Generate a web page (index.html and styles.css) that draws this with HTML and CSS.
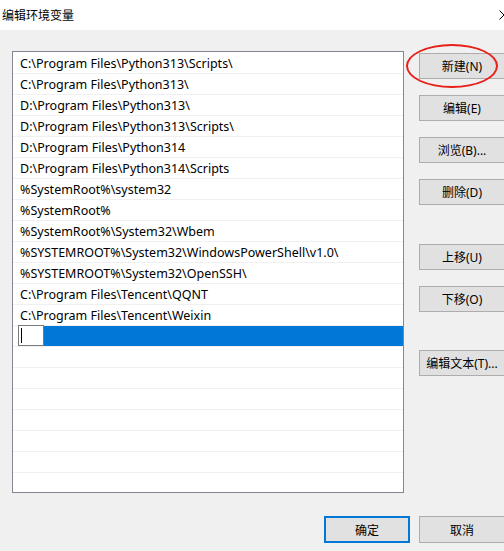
FILE: index.html
```html
<!DOCTYPE html>
<html lang="zh-CN">
<head>
    <meta charset="UTF-8">
    <title>编辑环境变量</title>
    <link rel="stylesheet" href="styles.css">
</head>
<body>
    <div class="dialog">
        <div class="titlebar">
            <span class="title">编辑环境变量</span>
            <span class="close">
                <svg width="10" height="10" viewBox="0 0 10 10">
                    <path d="M0.5 0.5 L9.5 9.5 M9.5 0.5 L0.5 9.5" stroke="#000" stroke-width="1" fill="none"/>
                </svg>
            </span>
        </div>

        <div class="content">
            <div class="path-list">
                <div class="row">C:\Program Files\Python313\Scripts\</div>
                <div class="row">C:\Program Files\Python313\</div>
                <div class="row">D:\Program Files\Python313\</div>
                <div class="row">D:\Program Files\Python313\Scripts\</div>
                <div class="row">D:\Program Files\Python314</div>
                <div class="row">D:\Program Files\Python314\Scripts</div>
                <div class="row">%SystemRoot%\system32</div>
                <div class="row">%SystemRoot%</div>
                <div class="row">%SystemRoot%\System32\Wbem</div>
                <div class="row">%SYSTEMROOT%\System32\WindowsPowerShell\v1.0\</div>
                <div class="row">%SYSTEMROOT%\System32\OpenSSH\</div>
                <div class="row">C:\Program Files\Tencent\QQNT</div>
                <div class="row">C:\Program Files\Tencent\Weixin</div>
                <div class="row editing">
                    <span class="edit-box"><span class="caret"></span></span>
                    <span class="highlight"></span>
                </div>
                <div class="row"></div>
                <div class="row"></div>
                <div class="row"></div>
                <div class="row"></div>
                <div class="row"></div>
                <div class="row"></div>
                <div class="row"></div>
            </div>

            <div class="side-buttons">
                <div class="group">
                    <button class="btn">新建(N)</button>
                    <button class="btn">编辑(E)</button>
                    <button class="btn">浏览(B)...</button>
                    <button class="btn">删除(D)</button>
                </div>
                <div class="group move">
                    <button class="btn">上移(U)</button>
                    <button class="btn">下移(O)</button>
                </div>
                <button class="btn text-edit">编辑文本(T)...</button>
            </div>
        </div>

        <div class="footer">
            <button class="btn default">确定</button>
            <button class="btn">取消</button>
        </div>

        <!-- red circle drawn around the "new" button -->
        <div class="mark"></div>
    </div>
</body>
</html>
```

FILE: styles.css
```css
body {
    margin: 0;
    width: 504px;
    height: 551px;
    overflow: hidden;
    background: #f0f0f0;
    font-family: "Noto Sans", "Noto Sans CJK SC", sans-serif;
    font-size: 12px;
    color: #000;
}
.dialog {
    position: relative;
    height: 551px;
}
.titlebar {
    height: 30px;
    background: #fff;
    display: flex;
    align-items: center;
    justify-content: space-between;
}
.title {
    padding-left: 2px;
    font-family: "Noto Sans CJK SC", sans-serif;
    font-size: 12px;
    margin-top: -1px;
}
.close {
    display: flex;
    margin-right: -5px;
    margin-top: -1px;
}
.content {
    display: flex;
    padding: 21px 0 0 12px;
    gap: 15px;
}
.path-list {
    width: 392px;
    height: 442px;
    padding-top: 1px;
    box-sizing: border-box;
    border: 1px solid #828790;
    background: #fff;
    overflow: hidden;
    flex-shrink: 0;
}
.row {
    height: 20px;
    line-height: 22px;
    padding-left: 7px;
    font-size: 12.5px;
    border-bottom: 1px solid #f0f0f0;
    white-space: nowrap;
}
.row.editing {
    display: flex;
    padding-left: 5px;
}
.edit-box {
    width: 24px;
    height: 19px;
    margin-top: -1px;
    border: 1px solid #7a7a7a;
    background: #fff;
    position: relative;
}
.caret {
    position: absolute;
    left: 2px;
    top: 2px;
    width: 1px;
    height: 15px;
    background: #000;
}
.highlight {
    flex: 1;
    background: #0078d7;
}
.side-buttons {
    display: flex;
    flex-direction: column;
    padding-top: 2px;
}
.group {
    display: flex;
    flex-direction: column;
    gap: 16px;
}
.group.move {
    margin-top: 39px;
}
.text-edit {
    margin-top: 38px;
}
.btn {
    width: 86px;
    height: 26px;
    flex-shrink: 0;
    background: #e1e1e1;
    border: 1px solid #adadad;
    font-family: "Noto Sans", "Noto Sans CJK SC", sans-serif;
    font-size: 12px;
    color: #000;
    padding: 0;
}
.footer {
    display: flex;
    gap: 9px;
    padding: 23px 0 0 324px;
}
.footer .btn {
    height: 27px;
}
.btn.default {
    border: 2px solid #0078d7;
}
.mark {
    position: absolute;
    left: 406px;
    top: 44px;
    width: 88px;
    height: 40px;
    border: 2.5px solid #e8201a;
    border-radius: 50%;
}
```
